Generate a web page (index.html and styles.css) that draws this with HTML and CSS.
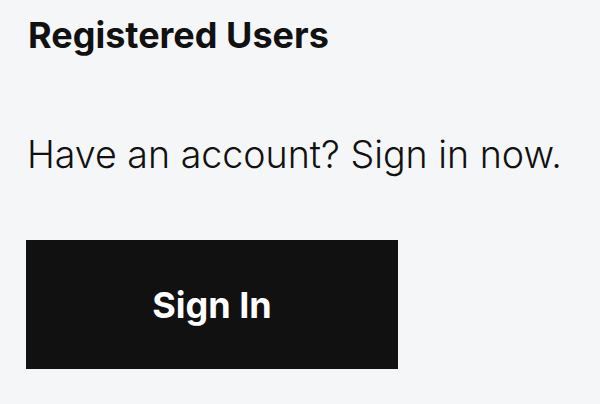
FILE: index.html
```html
<!DOCTYPE html>
<html>
<head>
<meta charset="utf-8">
<link rel="stylesheet" href="styles.css">
</head>
<body>
<main class="panel">
  <h2 class="title">Registered Users</h2>
  <p class="lead">Have an account? Sign in now.</p>
  <button class="btn" type="button">Sign In</button>
</main>
</body>
</html>
```
FILE: styles.css
```css
html, body {
  margin: 0;
  padding: 0;
  background: #f5f6f8;
}
body {
  width: 600px;
  height: 404px;
  overflow: hidden;
  font-family: Inter, Lato, sans-serif;
  color: #111;
}
.panel {
  padding: 11px 26px 0 26px;
  display: flex;
  flex-direction: column;
  align-items: flex-start;
}
.title {
  margin: 0 0 0 2px;
  font-size: 36px;
  font-weight: 700;
  line-height: 48px;
}
.lead {
  margin: 72px 0 0 1px;
  font-size: 37.6px;
  font-weight: 300;
  line-height: 48px;
}
.btn {
  margin-top: 61px;
  width: 372px;
  height: 129px;
  background: #111;
  color: #fff;
  border: none;
  font-family: inherit;
  font-size: 36px;
  font-weight: 700;
  padding: 0;
}
```
